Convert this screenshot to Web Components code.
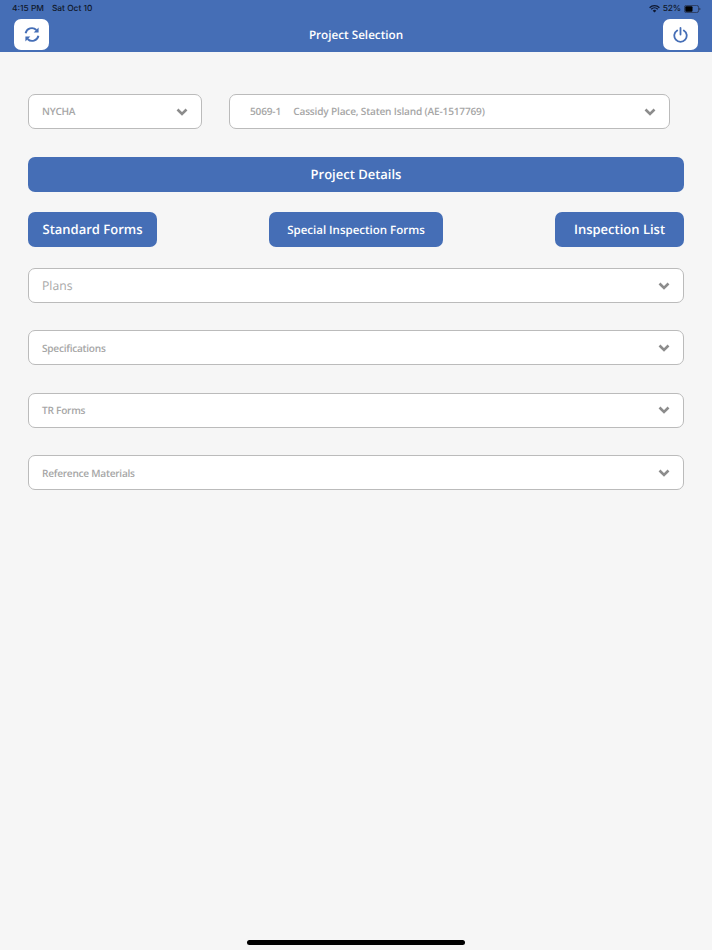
<!DOCTYPE html>
<html><head><meta charset="utf-8"><title>Project Selection</title>
<style>
html,body{margin:0;height:100%}
body{background:#f6f6f6;font-family:"Open Sans",sans-serif;text-rendering:geometricPrecision}
app-shell{height:950px}
</style></head><body>
<template id="t-shell"><style>
:host{display:flex;flex-direction:column;width:712px;height:950px;overflow:hidden;position:relative}
main{flex:1;display:flex;flex-direction:column;padding:42px 28px 0}
.top{display:flex;gap:27px;padding-right:14px;margin-bottom:28px}
.btns{display:flex;justify-content:space-between;margin:20px 0 21px}
.stack{display:flex;flex-direction:column;gap:27.4px}
.home{position:absolute;left:247px;top:940px;width:218px;height:5px;border-radius:3px;background:#000}
</style>
<slot name="bar"></slot>
<main>
<div class="top"><slot name="top"></slot></div>
<slot name="wide"></slot>
<div class="btns"><slot name="btns"></slot></div>
<div class="stack"><slot name="list"></slot></div>
</main>
<div class="home"></div></template>

<template id="t-bar"><style>
:host{display:block;height:52px;background:#456eb6;color:#fff;position:relative;flex:none}
.status{height:19px;display:flex;justify-content:space-between;align-items:center;padding:0 11px 1px 12px;box-sizing:border-box;font:500 8.4px/16px Inter,"Liberation Sans",sans-serif;color:#10182a}
.l{display:flex;gap:8px}
.r{display:flex;gap:3px;align-items:center}
.r span{letter-spacing:-.15px}
.row{height:31px;display:flex;justify-content:space-between;align-items:center;padding:0 14px;position:relative}
.title{position:absolute;left:0;right:0;top:1px;text-align:center;font:600 11.7px/31px "Open Sans",sans-serif}
.ic{width:35px;height:31px;background:#fff;border-radius:7px;display:flex;align-items:center;justify-content:center;position:relative}
svg{display:block}
</style>
<div class="status"><div class="l"><span>4:15 PM</span><span>Sat Oct 10</span></div>
<div class="r"><svg width="11" height="8" viewBox="0 0 11 8"><path d="M.6 2.7a7 7 0 0 1 9.8 0M2.2 4.3a4.7 4.7 0 0 1 6.6 0" fill="none" stroke="#0f1830" stroke-width="1.3"/><path d="M3.7 5.7a2.6 2.6 0 0 1 3.6 0L5.5 7.6z" fill="#0f1830"/></svg><span>52%</span>
<svg width="17" height="8" viewBox="0 0 17 8"><rect x=".4" y=".4" width="14.2" height="7.2" rx="2" fill="none" stroke="#26304a" stroke-width=".8"/><rect x="1.3" y="1.3" width="7.2" height="5.4" rx="1" fill="#000"/><path d="M15.4 2.8c.7.2 1.1.7 1.1 1.2s-.4 1-1.1 1.2z" fill="#26304a"/></svg></div></div>
<div class="row"><div class="title">Project Selection</div>
<div class="ic"><svg width="16" height="15" viewBox="0 0 16 15"><path d="M1.6 6.3A6.4 6.4 0 0 1 12.4 3M14.4 8.7A6.4 6.4 0 0 1 3.6 12" fill="none" stroke="#456eb6" stroke-width="1.9"/><path d="M14.6.6v4.9H9.7zM1.4 14.4V9.5h4.9z" fill="#456eb6"/></svg></div>
<div class="ic"><svg width="15" height="16" viewBox="0 0 15 16"><path d="M4.2 3.4a6.2 6.2 0 1 0 6.6 0" fill="none" stroke="#456eb6" stroke-width="1.8" stroke-linecap="round"/><path d="M7.5 1v6.6" fill="none" stroke="#456eb6" stroke-width="1.8" stroke-linecap="round"/></svg></div></div></template>

<template id="t-sel"><style>
:host{display:flex;flex:1;align-items:center;height:35px;box-sizing:border-box;background:#fff;border:1px solid #bbb;border-radius:7px;padding:0 13px;color:#a6a6a6;font:600 var(--fs,10.1px)/1 "Open Sans",sans-serif;letter-spacing:var(--ls,-.25px)}
:host([light]){font-weight:400;color:#a8a8a8}
.t{flex:1;white-space:pre;padding-top:var(--pt,0)}
svg{display:block;flex:none}
</style><span class="t"><slot></slot></span>
<svg width="12" height="8" viewBox="0 0 12 8"><path d="M1.5 1.5 6 6l4.5-4.5" fill="none" stroke="#8c8c8c" stroke-width="2.6"/></svg></template>

<template id="t-btn"><style>
:host{display:flex;align-items:center;justify-content:center;height:35px;background:#456eb6;border-radius:7px;color:#fff;font:650 var(--fs,13px)/1 "Open Sans",sans-serif;box-sizing:border-box}
</style><slot></slot></template>

<app-shell>
<top-bar slot="bar"></top-bar>
<sel-box slot="top" style="flex:none;width:174px">NYCHA</sel-box>
<sel-box slot="top" style="padding-left:20px;--ls:-.18px">5069-1     Cassidy Place, Staten Island (AE-1517769)</sel-box>
<blue-btn slot="wide">Project Details</blue-btn>
<blue-btn slot="btns" style="width:129px">Standard Forms</blue-btn>
<blue-btn slot="btns" style="width:174px;--fs:11.5px;padding-top:1.5px">Special Inspection Forms</blue-btn>
<blue-btn slot="btns" style="width:129px">Inspection List</blue-btn>
<sel-box slot="list" light style="--fs:12.2px;--pt:1px;--ls:0;flex:none">Plans</sel-box>
<sel-box slot="list" style="flex:none">Specifications</sel-box>
<sel-box slot="list" style="flex:none">TR Forms</sel-box>
<sel-box slot="list" style="flex:none">Reference Materials</sel-box>
</app-shell>
<script>
for(const [n,id] of [['app-shell','t-shell'],['top-bar','t-bar'],['sel-box','t-sel'],['blue-btn','t-btn']]){
customElements.define(n,class extends HTMLElement{constructor(){super();this.attachShadow({mode:'open'}).append(document.getElementById(id).content.cloneNode(true))}});
}
</script>
</body></html>
